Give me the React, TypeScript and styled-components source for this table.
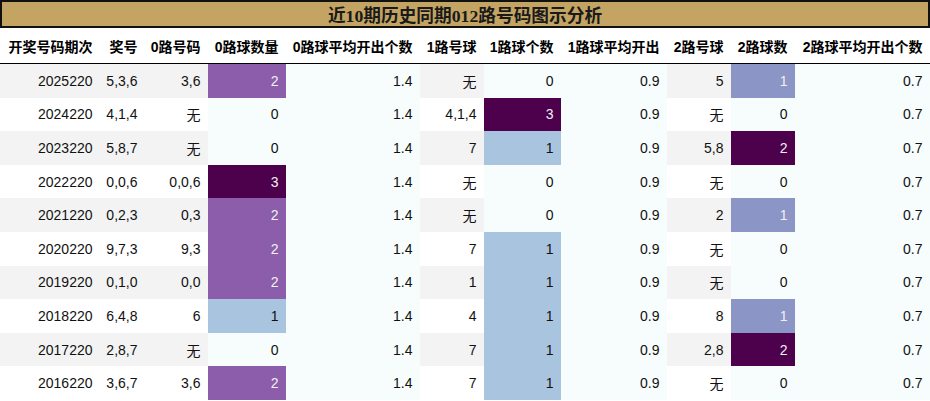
import React from "react";
import styled, { createGlobalStyle } from "styled-components";

const Global = createGlobalStyle`
  html, body { margin: 0; padding: 0; background: #ffffff; }
  body { font-family: "Liberation Sans", "Noto Sans CJK SC", sans-serif; }
`;

const COLS = "100px 45px 63px 78px 134px 64px 77px 106px 64px 64px 135px";

const Page = styled.div`
  width: 930px;
  display: flex;
  flex-direction: column;
`;

const Title = styled.div`
  height: 28px;
  box-sizing: border-box;
  border: 2px solid #111;
  background: #c4a462;
  display: flex;
  align-items: center;
  justify-content: center;
  font-family: "Liberation Serif", "Noto Sans CJK SC", serif;
  font-weight: bold;
  font-size: 17.7px;
  color: #1a1a1a;
`;

const HeaderRow = styled.div`
  display: grid;
  grid-template-columns: ${COLS};
  height: 36px;
  box-sizing: border-box;
  border-bottom: 1.5px solid #000;
  background: #fff;
`;

const HeaderCell = styled.div`
  display: flex;
  align-items: center;
  justify-content: flex-end;
  padding-right: 7.5px;
  font-weight: bold;
  font-size: 14px;
  color: #000;
  white-space: nowrap;
`;

const Row = styled.div<{ $stripe: boolean }>`
  display: grid;
  grid-template-columns: ${COLS};
  height: 33.6px;
  background: ${(p) => (p.$stripe ? "#f3f3f3" : "#ffffff")};
`;

const Cell = styled.div<{ $bg?: string; $fg?: string }>`
  display: flex;
  align-items: center;
  justify-content: flex-end;
  padding-right: 7.5px;
  font-size: 14px;
  white-space: nowrap;
  background: ${(p) => p.$bg || "transparent"};
  color: ${(p) => p.$fg || "#111"};
`;

const headers = [
  "开奖号码期次",
  "奖号",
  "0路号码",
  "0路球数量",
  "0路球平均开出个数",
  "1路号球",
  "1路球个数",
  "1路球平均开出",
  "2路号球",
  "2路球数",
  "2路球平均开出个数",
];

type RowData = [string, string, string, number, string, string, number, string, string, number, string];

const rows: RowData[] = [
  ["2025220", "5,3,6", "3,6", 2, "1.4", "无", 0, "0.9", "5", 1, "0.7"],
  ["2024220", "4,1,4", "无", 0, "1.4", "4,1,4", 3, "0.9", "无", 0, "0.7"],
  ["2023220", "5,8,7", "无", 0, "1.4", "7", 1, "0.9", "5,8", 2, "0.7"],
  ["2022220", "0,0,6", "0,0,6", 3, "1.4", "无", 0, "0.9", "无", 0, "0.7"],
  ["2021220", "0,2,3", "0,3", 2, "1.4", "无", 0, "0.9", "2", 1, "0.7"],
  ["2020220", "9,7,3", "9,3", 2, "1.4", "7", 1, "0.9", "无", 0, "0.7"],
  ["2019220", "0,1,0", "0,0", 2, "1.4", "1", 1, "0.9", "无", 0, "0.7"],
  ["2018220", "6,4,8", "6", 1, "1.4", "4", 1, "0.9", "8", 1, "0.7"],
  ["2017220", "2,8,7", "无", 0, "1.4", "7", 1, "0.9", "2,8", 2, "0.7"],
  ["2016220", "3,6,7", "3,6", 2, "1.4", "7", 1, "0.9", "无", 0, "0.7"],
];

const BUPU = ["#f7fcfd", "#e0ecf4", "#bfd3e6", "#9ebcda", "#8c96c6", "#8c6bb1", "#88419d", "#810f7c", "#4d004b"];

function hex(c: string) {
  return [1, 3, 5].map((i) => parseInt(c.slice(i, i + 2), 16));
}

function bupu(t: number): string {
  const pos = Math.max(0, Math.min(1, t)) * (BUPU.length - 1);
  const i = Math.min(Math.floor(pos), BUPU.length - 2);
  const f = pos - i;
  const a = hex(BUPU[i]);
  const b = hex(BUPU[i + 1]);
  const m = a.map((v, k) => Math.round(v + (b[k] - v) * f));
  return `rgb(${m[0]},${m[1]},${m[2]})`;
}

function lum(rgb: string) {
  const m = rgb.match(/\d+/g)!.map((v) => {
    const c = Number(v) / 255;
    return c <= 0.03928 ? c / 12.92 : Math.pow((c + 0.055) / 1.055, 2.4);
  });
  return 0.2126 * m[0] + 0.7152 * m[1] + 0.0722 * m[2];
}

const gradCols = [3, 6, 9];
const flatCols = [4, 7, 10];
const ranges: Record<number, [number, number]> = {};
gradCols.forEach((c) => {
  const vals = rows.map((r) => r[c] as number);
  ranges[c] = [Math.min(...vals), Math.max(...vals)];
});

function cellStyle(col: number, v: string | number): { bg?: string; fg?: string } {
  if (flatCols.includes(col)) return { bg: BUPU[0], fg: "#111" };
  if (gradCols.includes(col)) {
    const [lo, hi] = ranges[col];
    const bg = bupu(((v as number) - lo) / (hi - lo || 1));
    return { bg, fg: lum(bg) < 0.408 ? "#f1f1f1" : "#111" };
  }
  return {};
}

export default function App() {
  return (
    <Page>
      <Global />
      <Title>近10期历史同期012路号码图示分析</Title>
      <HeaderRow>
        {headers.map((h) => (
          <HeaderCell key={h}>{h}</HeaderCell>
        ))}
      </HeaderRow>
      {rows.map((r, i) => (
        <Row key={r[0]} $stripe={i % 2 === 0}>
          {r.map((v, c) => {
            const s = cellStyle(c, v);
            return (
              <Cell key={c} $bg={s.bg} $fg={s.fg}>
                {v}
              </Cell>
            );
          })}
        </Row>
      ))}
    </Page>
  );
}
